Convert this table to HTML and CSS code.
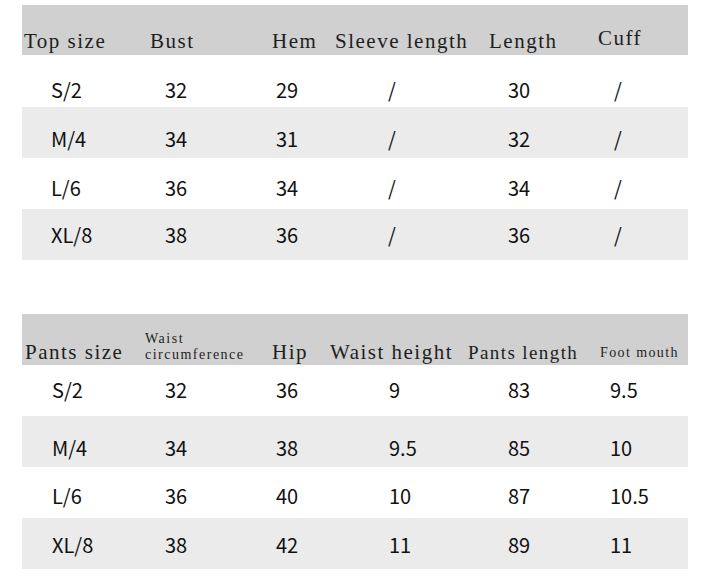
FILE: index.html
```html
<!DOCTYPE html>
<html>
<head>
<meta charset="utf-8">
<link rel="stylesheet" href="styles.css">
</head>
<body>
<div class="page">
  <div class="chart top">
    <div class="head">
      <div class="h">Top size</div>
      <div class="h">Bust</div>
      <div class="h">Hem</div>
      <div class="h">Sleeve length</div>
      <div class="h">Length</div>
      <div class="h cuff">Cuff</div>
    </div>
    <div class="row r1">
      <div>S/2</div><div>32</div><div>29</div><div>/</div><div>30</div><div>/</div>
    </div>
    <div class="row shade r2">
      <div>M/4</div><div>34</div><div>31</div><div>/</div><div>32</div><div>/</div>
    </div>
    <div class="row r3">
      <div>L/6</div><div>36</div><div>34</div><div>/</div><div>34</div><div>/</div>
    </div>
    <div class="row shade r4">
      <div>XL/8</div><div>38</div><div>36</div><div>/</div><div>36</div><div>/</div>
    </div>
  </div>

  <div class="chart pants">
    <div class="head">
      <div class="h">Pants size</div>
      <div class="h small">Waist<br>circumference</div>
      <div class="h">Hip</div>
      <div class="h">Waist height</div>
      <div class="h mid">Pants length</div>
      <div class="h tiny">Foot mouth</div>
    </div>
    <div class="row r1">
      <div>S/2</div><div>32</div><div>36</div><div>9</div><div>83</div><div>9.5</div>
    </div>
    <div class="row shade r2">
      <div>M/4</div><div>34</div><div>38</div><div>9.5</div><div>85</div><div>10</div>
    </div>
    <div class="row r3">
      <div>L/6</div><div>36</div><div>40</div><div>10</div><div>87</div><div>10.5</div>
    </div>
    <div class="row shade r4">
      <div>XL/8</div><div>38</div><div>42</div><div>11</div><div>89</div><div>11</div>
    </div>
  </div>
</div>
</body>
</html>
```

FILE: styles.css
```css
html, body {
  margin: 0;
  padding: 0;
  background: #ffffff;
}

.page {
  padding: 5px 0 0 22px;
  width: 666px;
}

.chart {
  display: flex;
  flex-direction: column;
  width: 666px;
}

.chart.pants {
  margin-top: 54px;
}

.head {
  display: grid;
  align-items: end;
  background: #d0d0d0;
  box-sizing: border-box;
  font-family: "Liberation Serif", "Times New Roman", serif;
  font-size: 21px;
  line-height: 21px;
  letter-spacing: 1.5px;
  color: #1e1e1e;
  white-space: nowrap;
}

.top .head {
  height: 50px;
  padding: 0 0 3px 2px;
  grid-template-columns: 126px 122px 63px 154px 109px auto;
}

.pants .head {
  height: 51px;
  padding: 0 0 2px 3px;
  grid-template-columns: 120px 127px 58px 138px 132px auto;
}

.h.cuff {
  padding-bottom: 3px;
}

.h.small {
  font-size: 14px;
  line-height: 16px;
  letter-spacing: 1.5px;
}

.h.mid {
  font-size: 19px;
  letter-spacing: 1.4px;
}

.h.tiny {
  font-size: 14px;
  letter-spacing: 1.4px;
}

.row {
  display: grid;
  align-items: start;
  box-sizing: border-box;
  height: 51px;
  font-family: "Noto Sans CJK SC", "Noto Sans", sans-serif;
  font-size: 20px;
  line-height: 24px;
  color: #111111;
}

.row.shade {
  background: #ebebeb;
}

.top .row {
  padding-left: 29px;
  grid-template-columns: 114px 111px 112px 120px 106px auto;
}

.pants .row {
  padding-left: 30px;
  grid-template-columns: 113px 111px 113px 119px 102px auto;
}

.top .row.r1 { height: 52px; padding-top: 23px; }
.top .row.r2 { padding-top: 20px; }
.top .row.r3 { padding-top: 18px; }
.top .row.r4 { padding-top: 14px; }

.pants .row.r1 { padding-top: 13px; }
.pants .row.r2 { padding-top: 20px; }
.pants .row.r3 { padding-top: 17px; }
.pants .row.r4 { padding-top: 15px; }
```
